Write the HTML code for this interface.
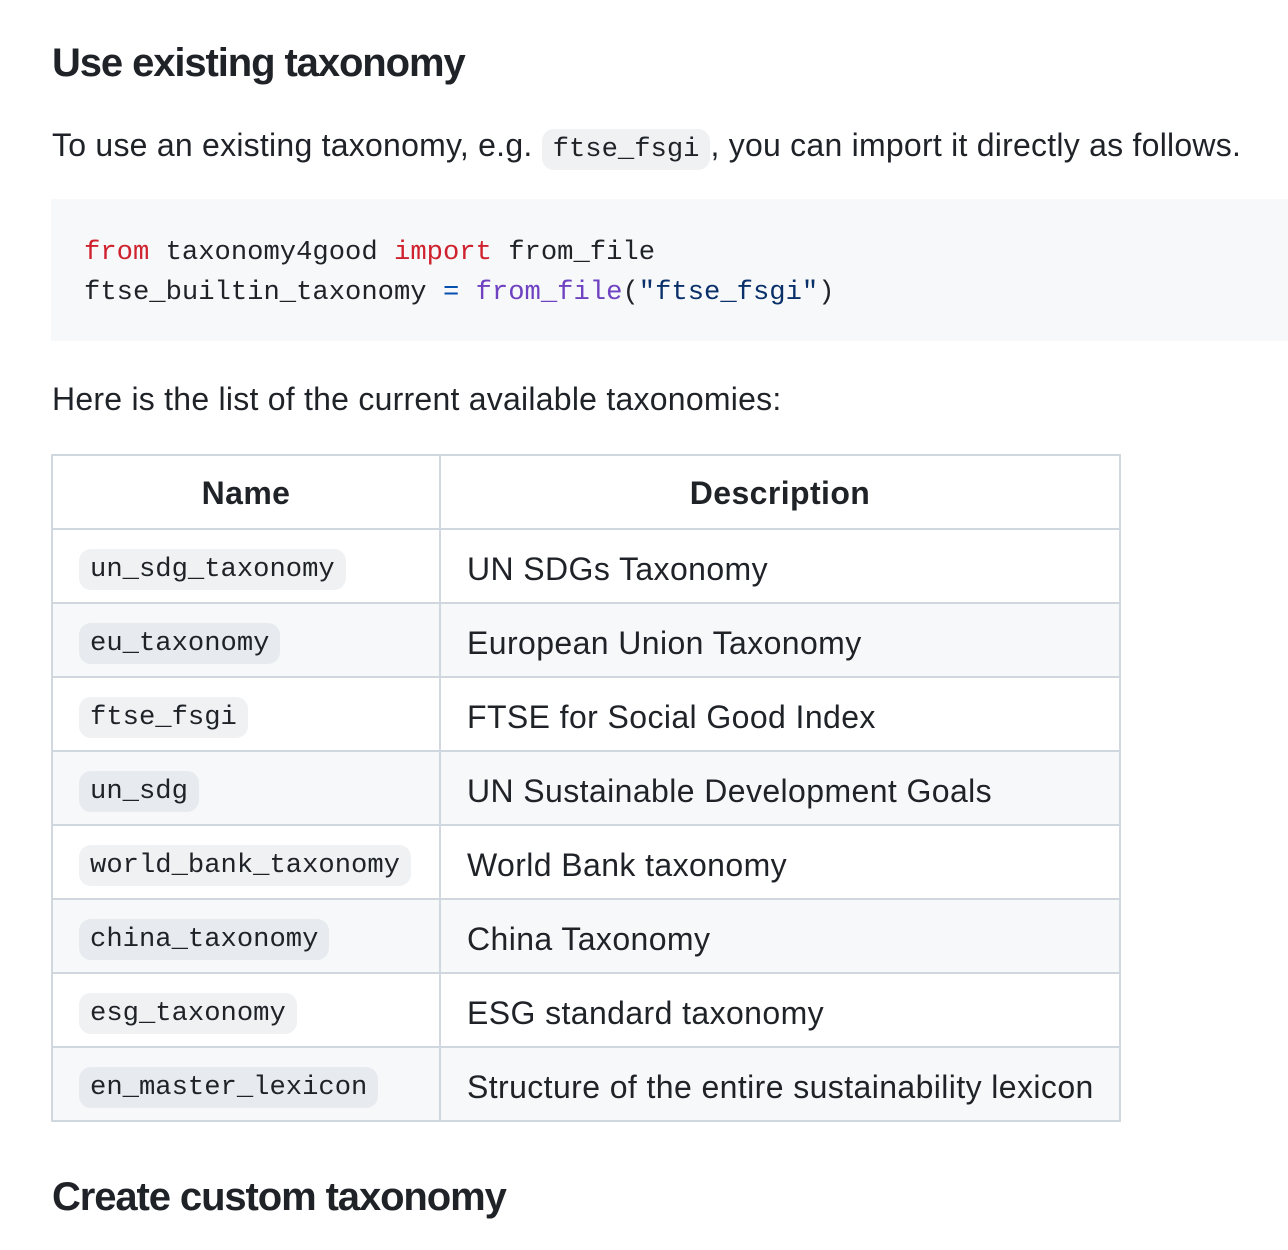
<!DOCTYPE html>
<html><head><meta charset="utf-8"><style>
body{margin:0;width:1288px;height:1250px;background:#fff;color:#1f2328;font-family:"Liberation Sans",sans-serif;position:relative;overflow:hidden}
.a{position:absolute;white-space:nowrap}
h3{margin:0;font-size:40px;font-weight:700;letter-spacing:-1.1px}
.p{font-size:32px;letter-spacing:0.24px}
code{font-family:"Liberation Mono",monospace;font-size:27.2px;background:rgba(175,184,193,0.2);border-radius:12px;padding:5px 11px;letter-spacing:0}
.pre{left:51px;top:199px;width:1300px;height:142px;background:#f6f8fa}
.pre div{position:absolute;left:33px;font-family:"Liberation Mono",monospace;font-size:27.2px;line-height:40px;white-space:pre}
.k{color:#cf222e}.f{color:#6f42c1}.s{color:#0a3069}.o{color:#0550ae}
.t{left:51px;top:454px;width:1070px;height:668px}
.r{position:absolute;left:0;width:1066px;height:72px;border:2px solid #d0d7de;border-bottom:none}
.r.e{background:#f6f8fa}
.r.last{border-bottom:2px solid #d0d7de}
.c1,.c2{position:absolute;top:3px;height:72px;display:flex;align-items:center;font-size:32px;letter-spacing:0.4px}
.c1{left:0;width:386px;padding-left:26px;box-sizing:border-box}
.vl{position:absolute;left:386px;top:0;width:2px;height:72px;background:#d0d7de}
.c2{left:388px;padding-left:26px}
.h .c1,.h .c2{font-weight:700;justify-content:center;padding:0;top:1px}
.h .c2{width:678px}
</style></head><body>
<h3 class="a" style="left:52px;top:41px">Use existing taxonomy</h3>
<div class="a p" style="left:52px;top:127px">To use an existing taxonomy, e.g. <code>ftse_fsgi</code>, you can import it directly as follows.</div>
<div class="a pre">
<div style="top:34px"><span class="k">from</span> taxonomy4good <span class="k">import</span> from_file</div>
<div style="top:74px">ftse_builtin_taxonomy <span class="o">=</span> <span class="f">from_file</span>(<span class="s">"ftse_fsgi"</span>)</div>
</div>
<div class="a p" style="left:52px;top:381px">Here is the list of the current available taxonomies:</div>
<div class="a t">
<div class="r h" style="top:0"><div class="vl"></div><div class="c1">Name</div><div class="c2">Description</div></div>
<div class="r" style="top:74px"><div class="vl"></div><div class="c1"><code>un_sdg_taxonomy</code></div><div class="c2">UN SDGs Taxonomy</div></div>
<div class="r e" style="top:148px"><div class="vl"></div><div class="c1"><code>eu_taxonomy</code></div><div class="c2">European Union Taxonomy</div></div>
<div class="r" style="top:222px"><div class="vl"></div><div class="c1"><code>ftse_fsgi</code></div><div class="c2">FTSE for Social Good Index</div></div>
<div class="r e" style="top:296px"><div class="vl"></div><div class="c1"><code>un_sdg</code></div><div class="c2">UN Sustainable Development Goals</div></div>
<div class="r" style="top:370px"><div class="vl"></div><div class="c1"><code>world_bank_taxonomy</code></div><div class="c2">World Bank taxonomy</div></div>
<div class="r e" style="top:444px"><div class="vl"></div><div class="c1"><code>china_taxonomy</code></div><div class="c2">China Taxonomy</div></div>
<div class="r" style="top:518px"><div class="vl"></div><div class="c1"><code>esg_taxonomy</code></div><div class="c2">ESG standard taxonomy</div></div>
<div class="r e last" style="top:592px"><div class="vl"></div><div class="c1"><code>en_master_lexicon</code></div><div class="c2">Structure of the entire sustainability lexicon</div></div>
</div>
<h3 class="a" style="left:52px;top:1175px">Create custom taxonomy</h3>
</body></html>
